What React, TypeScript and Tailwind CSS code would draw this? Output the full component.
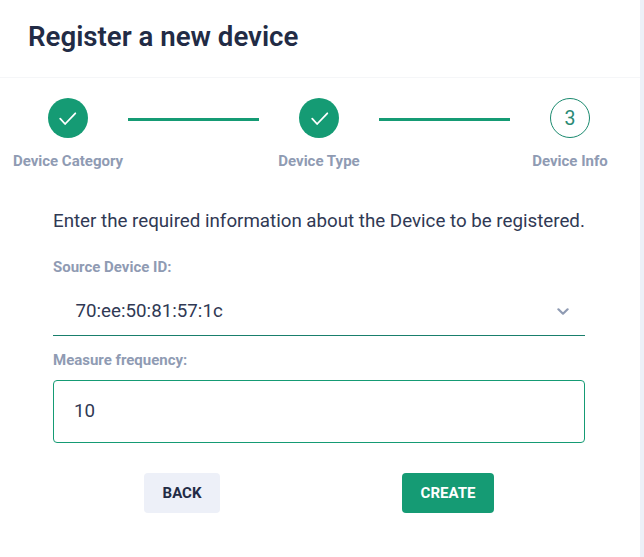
import React from "react";

function DoneStep({ checkClass = "" }: { checkClass?: string }) {
  return (
    <div className="flex size-10 items-center justify-center rounded-full bg-[#159b74]">
      <svg className={checkClass} width="20" height="20" viewBox="0 0 20 20" fill="none" stroke="white" strokeWidth="1.8" strokeLinecap="round" strokeLinejoin="round">
        <path d="M2.2 10.7l4.9 5.3L17.3 5.3" />
      </svg>
    </div>
  );
}

export default function App() {
  return (
    <div className="h-[557px] w-[644px] overflow-hidden bg-[#edf0f8] font-['Roboto',sans-serif] text-[#222b45]">
      <div className="h-full w-[640px] bg-white">
        <header className="h-[78px] border-b border-[#f5f6f8] pt-[21px] pl-7">
          <h1 className="text-[27.65px] leading-8 font-semibold">Register a new device</h1>
        </header>
        <div className="flex pt-5 pl-[13px] text-[15px] leading-5 font-bold text-[#8f9bb3]">
          <div className="flex w-[110px] flex-col items-center gap-[13px] whitespace-nowrap"><DoneStep />Device Category</div>
          <div className="mt-5 mr-[19px] ml-[5px] h-[3px] w-[131px] bg-[#159b74]" />
          <div className="flex w-[82px] flex-col items-center gap-[13px] whitespace-nowrap"><DoneStep checkClass="ml-px" />Device Type</div>
          <div className="mt-5 mr-[22px] ml-[19px] h-[3px] w-[131px] bg-[#159b74]" />
          <div className="flex w-[76px] flex-col items-center gap-[13px] whitespace-nowrap">
            <div className="flex size-10 items-center justify-center rounded-full border border-[#1b8a6f] pt-0.5 text-[19.5px] font-normal text-[#2a8a75]">3</div>
            Device Info
          </div>
        </div>
        <main className="ml-[53px] w-[532px] pt-[38px]">
          <p className="text-[18.75px] leading-6 font-normal tracking-[-0.01px] whitespace-nowrap text-[#303954]">Enter the required information about the Device to be registered.</p>
          <div className="mt-6 text-[15px] leading-5 font-bold text-[#8f9bb3]">Source Device ID:</div>
          <div className="mt-2 flex h-[51px] items-center justify-between border-b border-[#197f6c] pt-0.5 pr-4 pl-[22.5px] text-[18.75px] font-normal text-[#303954]">
            70:ee:50:81:57:1c
            <svg className="mt-0.5" width="12" height="8" viewBox="0 0 12 8" fill="none" stroke="#8f9bb3" strokeWidth="2.2" strokeLinecap="round" strokeLinejoin="round"><path d="M1.4 1.3l4.6 4.4 4.6-4.4" /></svg>
          </div>
          <div className="mt-3.5 text-[15px] leading-5 font-bold text-[#8f9bb3]">Measure frequency:</div>
          <div className="mt-2.5 flex h-[63px] items-center rounded border border-[#159b74] pb-px pl-[20px] text-[18.75px] font-normal text-[#303954]">10</div>
          <div className="mt-[30px] flex justify-between px-[91px] text-[15px] font-bold">
            <button className="h-10 w-[76px] rounded bg-[#edf0f8]">BACK</button>
            <button className="h-10 w-[92px] rounded bg-[#159b74] text-white">CREATE</button>
          </div>
        </main>
      </div>
    </div>
  );
}
